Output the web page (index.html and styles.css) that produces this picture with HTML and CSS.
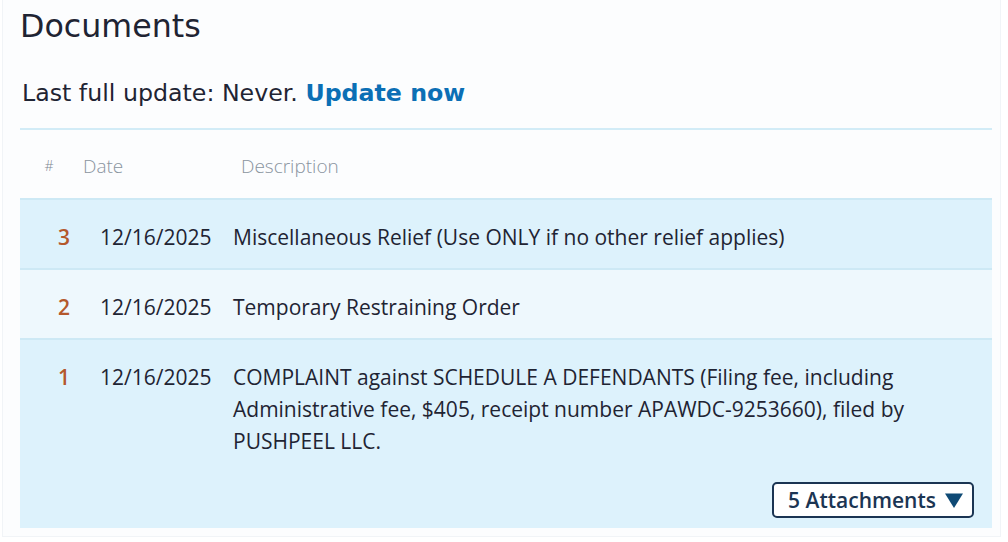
FILE: index.html
```html
<!DOCTYPE html>
<html>
<head>
<meta charset="utf-8">
<link rel="stylesheet" href="styles.css">
</head>
<body>
<div class="card">
  <h1 class="title">Documents</h1>
  <p class="update">Last full update: Never. <a class="update-link" href="#">Update now</a></p>
  <div class="table">
    <div class="row head">
      <div class="c-num">#</div>
      <div class="c-date">Date</div>
      <div class="c-desc">Description</div>
    </div>
    <div class="row entry dark">
      <div class="c-num num">3</div>
      <div class="c-date">12/16/2025</div>
      <div class="c-desc">Miscellaneous Relief (Use ONLY if no other relief applies)</div>
    </div>
    <div class="row entry light">
      <div class="c-num num">2</div>
      <div class="c-date">12/16/2025</div>
      <div class="c-desc">Temporary Restraining Order</div>
    </div>
    <div class="row entry dark tall">
      <div class="c-num num">1</div>
      <div class="c-date">12/16/2025</div>
      <div class="c-desc">
        <div class="desc-text">COMPLAINT against SCHEDULE A DEFENDANTS (Filing fee, including Administrative fee, $405, receipt number APAWDC-9253660), filed by PUSHPEEL LLC.</div>
        <div class="attach-wrap"><button class="attach">5 Attachments <svg class="tri" width="20" height="17" viewBox="0 0 20 17"><path d="M1 1.5 H19 L10 16 Z" fill="#0f4a75"/></svg></button></div>
      </div>
    </div>
  </div>
</div>
</body>
</html>
```

FILE: styles.css
```css
html, body {
  margin: 0;
  padding: 0;
  background: #ffffff;
}
.card {
  margin: 0 7px 0 2px;
  height: 537px;
  box-sizing: border-box;
  border: 1px solid #f1f4f7;
  border-top: none;
  background: #fcfdfe;
  padding: 0 8px 0 17px;
  font-family: "DejaVu Sans", sans-serif;
  color: #1f2433;
}
.title {
  margin: 0;
  padding-top: 5px;
  font-weight: normal;
  font-size: 31.7px;
  line-height: 42px;
  color: #1f2433;
}
.update {
  margin: 30px 0 0 2px;
  font-size: 23.7px;
  line-height: 32px;
  color: #1f2433;
}
.update-link {
  color: #0b6fb5;
  font-weight: bold;
  text-decoration: none;
}
.table {
  margin-top: 19px;
  border-top: 2px solid #d2ecf7;
  font-family: "Open Sans", sans-serif;
  font-size: 21px;
}
.row {
  display: flex;
  border-bottom: 2px solid #cde9f5;
}
.head {
  height: 70px;
  padding-top: 3px;
  box-sizing: border-box;
  align-items: center;
  color: #8a949f;
  font-weight: 300;
  font-size: 19px;
  background: #fcfdfe;
}
.head .c-num {
  width: 44px;
  padding-left: 14px;
  box-sizing: border-box;
  text-align: center;
  font-size: 14px;
  color: #7d8792;
}
.head .c-date {
  width: 177px;
  padding-left: 19px;
  box-sizing: border-box;
}
.c-desc {
  flex: 1;
  padding-right: 40px;
}
.entry {
  padding-top: 21px;
  box-sizing: border-box;
  height: 70px;
  color: #1f2433;
  line-height: 32px;
}
.entry .c-num {
  width: 64px;
  padding-left: 24px;
  box-sizing: border-box;
  text-align: center;
}
.entry .c-date {
  width: 149px;
  padding-left: 16px;
  box-sizing: border-box;
}
.dark { background: #ddf2fc; }
.light { background: #eef8fd; }
.tall {
  height: 188px;
  border-bottom: none;
}
.num {
  color: #b4582c;
  font-weight: 600;
}
.attach-wrap {
  display: flex;
  justify-content: flex-end;
  margin-top: 25px;
  margin-right: -22px;
}
.attach {
  font-family: "Open Sans", sans-serif;
  font-weight: 600;
  font-size: 21px;
  color: #1b3553;
  background: #ffffff;
  border: 2px solid #1b3553;
  border-radius: 5px;
  height: 36px;
  padding: 0 8px 0 14px;
  display: flex;
  align-items: center;
  gap: 8px;
}
.tri {
  display: block;
}
```
